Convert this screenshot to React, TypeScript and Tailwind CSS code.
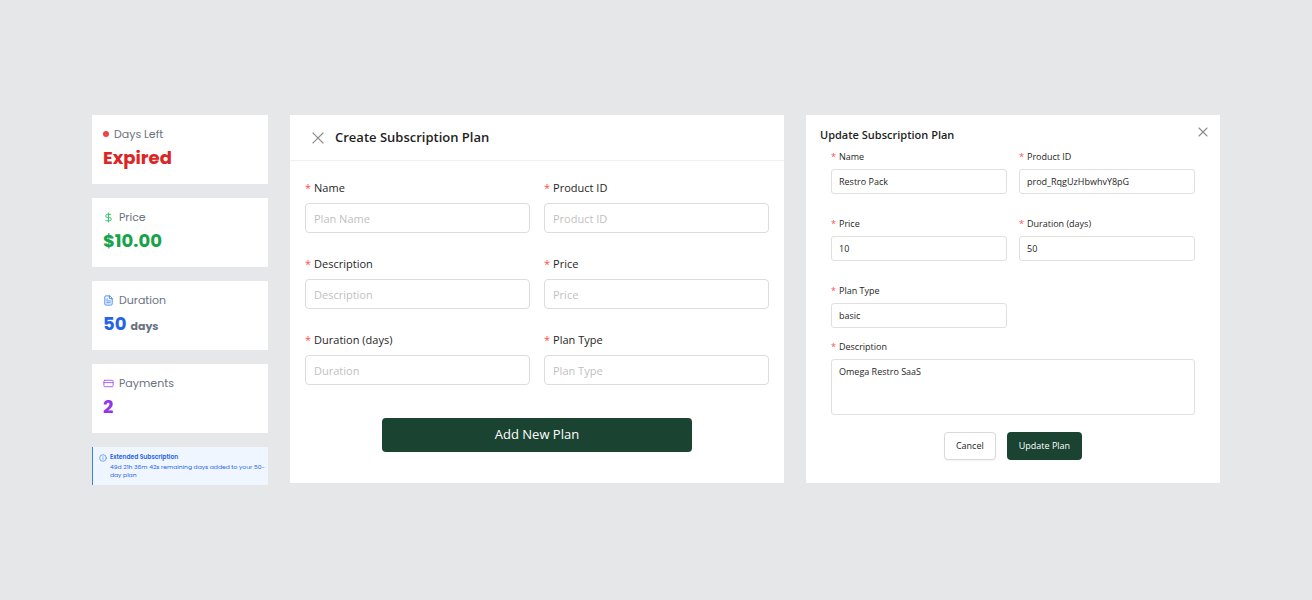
import React, { useId } from "react";
import { CreditCard, DollarSign, FileText, Info, X } from "lucide-react";

const geometric = "font-[Poppins,Inter,sans-serif]";

type StatProps = {
  icon: React.ReactNode;
  label: string;
  value: string;
  unit?: string;
  color: string;
};

function StatCard({ icon, label, value, unit, color }: StatProps) {
  return (
    <section className="bg-white px-[11px] pt-[9px] pb-3">
      <h3 className="flex h-5 items-center gap-[5px] text-[11px] text-[#6b7280]">
        {icon}
        {label}
      </h3>
      <p className={"flex items-baseline gap-1 text-[18px] leading-7 font-bold " + color}>
        {value}
        {unit && <span className="text-[11px] leading-none text-[#6b7280]">{unit}</span>}
      </p>
    </section>
  );
}

type FieldProps = {
  label: string;
  placeholder?: string;
  value?: string;
  compact?: boolean;
  multiline?: boolean;
};

function Field({ label, placeholder, value, compact, multiline }: FieldProps) {
  const id = useId();
  const box = compact
    ? "w-full rounded-[3px] border border-[#e0e0e0] bg-white px-[7px] text-[9px] text-[#262626] outline-none "
    : "w-full rounded-[4px] border border-[#dcdcdc] bg-white px-2 text-[11px] text-[#262626] outline-none placeholder:text-[#bfbfbf] ";
  return (
    <div className={compact ? "flex flex-col gap-[3px]" : "flex flex-col gap-[5px]"}>
      <label
        htmlFor={id}
        className={
          compact
            ? "flex h-[18px] items-center gap-[3px] text-[9px] text-[#262626]"
            : "flex h-5 items-center gap-[3px] text-[11px] text-[#262626]"
        }
      >
        <span className="text-[#ff4d4f]">*</span>
        {label}
      </label>
      {multiline ? (
        <textarea id={id} defaultValue={value} className={box + "block h-14 resize-none py-[5px] leading-[14px]"} />
      ) : (
        <input
          id={id}
          type="text"
          defaultValue={value}
          placeholder={placeholder}
          className={box + (compact ? "h-[25px]" : "h-[30px]")}
        />
      )}
    </div>
  );
}

function Stats() {
  return (
    <aside className={"flex flex-col gap-[14px] " + geometric}>
      <StatCard
        icon={<span className="size-[6px] rounded-full bg-[#ef4444]" />}
        label="Days Left"
        value="Expired"
        color="text-[#dc2626]"
      />
      <StatCard
        icon={<DollarSign className="size-[11px] text-[#22c55e]" />}
        label="Price"
        value="$10.00"
        color="text-[#16a34a]"
      />
      <StatCard
        icon={<FileText className="size-[11px] text-[#3b82f6]" />}
        label="Duration"
        value="50"
        unit="days"
        color="text-[#2563eb]"
      />
      <StatCard
        icon={<CreditCard className="size-[11px] text-[#a855f7]" />}
        label="Payments"
        value="2"
        color="text-[#9333ea]"
      />
      <div className="flex gap-[3px] border-l border-[#3b82f6] bg-[#eff6ff] py-[6px] pl-[6px] text-[6px] leading-[8px] text-[#2563eb]">
        <Info className="mt-px size-2 shrink-0 text-[#3b82f6]" />
        <div>
          <p className="mb-[2px] font-semibold">Extended Subscription</p>
          <p>49d 21h 36m 42s remaining days added to your 50-day plan</p>
        </div>
      </div>
    </aside>
  );
}

function CreatePlan() {
  return (
    <section className="bg-white">
      <header className="flex h-[46px] items-center gap-[7px] border-b border-[#f0f0f0] px-[18px]">
        <button type="button" aria-label="Close" className="text-[#8c8c8c]">
          <X className="size-5" strokeWidth={1.4} />
        </button>
        <h2 className="text-[13px] font-semibold text-[#1f1f1f]">Create Subscription Plan</h2>
      </header>
      <form className="px-[15px] pt-[17px] pb-[31px]">
        <div className="grid grid-cols-2 gap-x-[14px] gap-y-[21px]">
          <Field label="Name" placeholder="Plan Name" />
          <Field label="Product ID" placeholder="Product ID" />
          <Field label="Description" placeholder="Description" />
          <Field label="Price" placeholder="Price" />
          <Field label="Duration (days)" placeholder="Duration" />
          <Field label="Plan Type" placeholder="Plan Type" />
        </div>
        <button
          type="button"
          className="mx-auto mt-[33px] block h-[34px] w-full max-w-[310px] rounded-[4px] bg-[#1b4332] text-[13px] text-white"
        >
          Add New Plan
        </button>
      </form>
    </section>
  );
}

function UpdatePlan() {
  return (
    <section className="bg-white pt-[10px] pb-[23px]">
      <header className="mb-[3px] flex h-5 items-center justify-between pr-[9px] pl-[14px]">
        <h2 className="text-[11px] font-semibold text-[#1f1f1f]">Update Subscription Plan</h2>
        <button type="button" aria-label="Close" className="-mt-[6px] text-[#8c8c8c]">
          <X className="size-4" strokeWidth={1.6} />
        </button>
      </header>
      <form className="px-[25px]">
        <div className="grid grid-cols-2 gap-x-3 gap-y-[21px]">
          <Field compact label="Name" value="Restro Pack" />
          <Field compact label="Product ID" value="prod_RqgUzHbwhvY8pG" />
          <Field compact label="Price" value="10" />
          <Field compact label="Duration (days)" value="50" />
          <Field compact label="Plan Type" value="basic" />
        </div>
        <div className="mt-[10px]">
          <Field compact multiline label="Description" value="Omega Restro SaaS" />
        </div>
        <div className="mt-[17px] flex justify-center gap-[11px] text-[9px] font-medium">
          <button type="button" className="h-7 rounded-[4px] border border-[#d9d9d9] bg-white px-[11px] text-[#262626] shadow-xs">
            Cancel
          </button>
          <button type="button" className="h-7 rounded-[4px] bg-[#1b4332] px-3 text-white">
            Update Plan
          </button>
        </div>
      </form>
    </section>
  );
}

export default function App() {
  return (
    <main className="min-h-screen bg-[#e5e7e9] px-6 pt-[115px] pb-12 font-['Segoe_UI','Open_Sans',sans-serif] lg:px-[92px]">
      <div className="grid items-start gap-[22px] lg:grid-cols-[176fr_494fr_414fr]">
        <Stats />
        <CreatePlan />
        <UpdatePlan />
      </div>
    </main>
  );
}
